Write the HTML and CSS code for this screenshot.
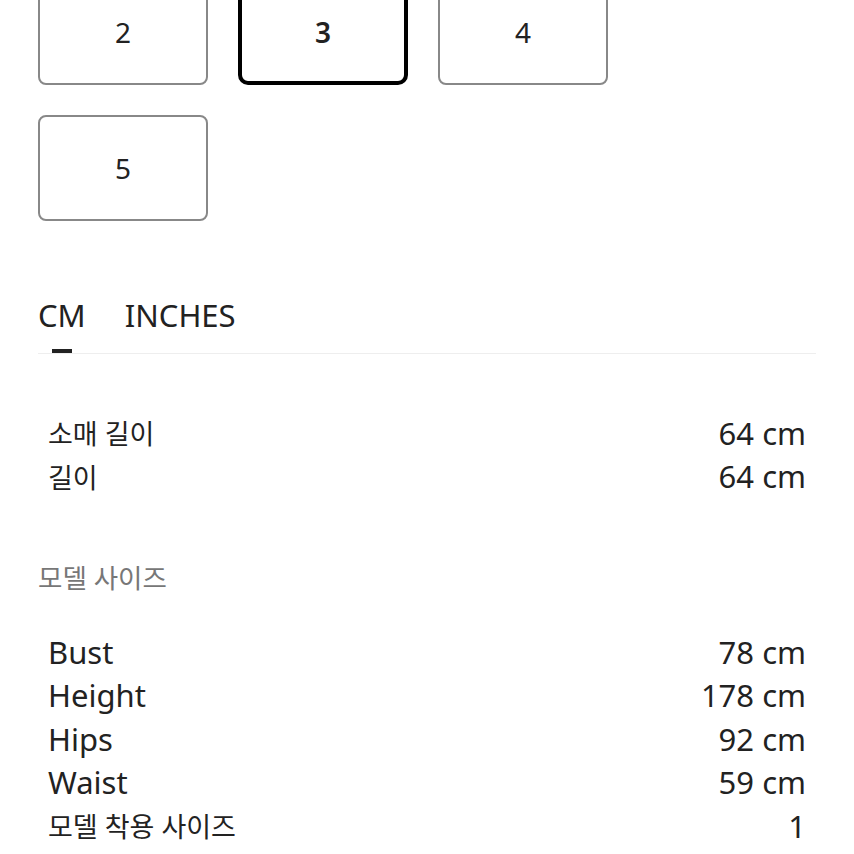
FILE: index.html
```html
<!DOCTYPE html>
<html lang="ko">
<head>
  <meta charset="UTF-8">
  <title>사이즈 정보</title>
  <meta name="viewport" content="width=device-width, initial-scale=1.0">
  <link rel="stylesheet" href="styles.css">
</head>
<body>
  <div class="page">
    <div class="size-grid">
      <div class="size-box">2</div>
      <div class="size-box selected">3</div>
      <div class="size-box">4</div>
      <div class="size-box">5</div>
    </div>

    <div class="tabs">
      <div class="tab active">CM</div>
      <div class="tab">INCHES</div>
    </div>

    <div class="measure-list first">
      <div class="row"><span class="label ko">소매 길이</span><span class="value">64 cm</span></div>
      <div class="row"><span class="label ko">길이</span><span class="value">64 cm</span></div>
    </div>

    <div class="section-title">모델 사이즈</div>

    <div class="measure-list">
      <div class="row"><span class="label">Bust</span><span class="value">78 cm</span></div>
      <div class="row"><span class="label">Height</span><span class="value">178 cm</span></div>
      <div class="row"><span class="label">Hips</span><span class="value">92 cm</span></div>
      <div class="row"><span class="label">Waist</span><span class="value">59 cm</span></div>
      <div class="row"><span class="label ko">모델 착용 사이즈</span><span class="value">1</span></div>
    </div>
  </div>
</body>
</html>
```

FILE: styles.css
```css
body {
  margin: 0;
  background: #fff;
  color: #222;
  font-family: "Noto Sans", "Noto Sans CJK KR", sans-serif;
  overflow: hidden;
}

.page {
  padding: 0 38px;
  margin-top: -21px;
}

.size-grid {
  display: grid;
  grid-template-columns: repeat(3, 170px);
  gap: 30px;
}

.size-box {
  box-sizing: border-box;
  height: 106px;
  border: 2px solid #888;
  border-radius: 8px;
  display: flex;
  align-items: center;
  justify-content: center;
  font-size: 28px;
  color: #222;
}

.size-box.selected {
  border: 4px solid #000;
  border-radius: 10px;
  font-weight: 600;
}

.tabs {
  margin-top: 74px;
  display: flex;
  gap: 39px;
  border-bottom: 1px solid #eee;
}

.tab {
  position: relative;
  font-size: 31px;
  line-height: 40px;
  padding-bottom: 18px;
  color: #222;
}

.tab.active::after {
  content: "";
  position: absolute;
  left: 50%;
  bottom: 0;
  width: 20px;
  height: 4px;
  margin-left: -10px;
  background: #222;
}

.measure-list {
  padding: 0 10px;
  margin-top: 33px;
}

.measure-list.first {
  margin-top: 57px;
}

.row {
  display: flex;
  justify-content: space-between;
  align-items: center;
  height: 43.5px;
}

.label {
  font-size: 31px;
}

.label.ko {
  font-size: 27px;
}

.value {
  font-size: 31px;
}

.section-title {
  margin-top: 61px;
  font-size: 26.5px;
  line-height: 38px;
  color: #777;
}
```
